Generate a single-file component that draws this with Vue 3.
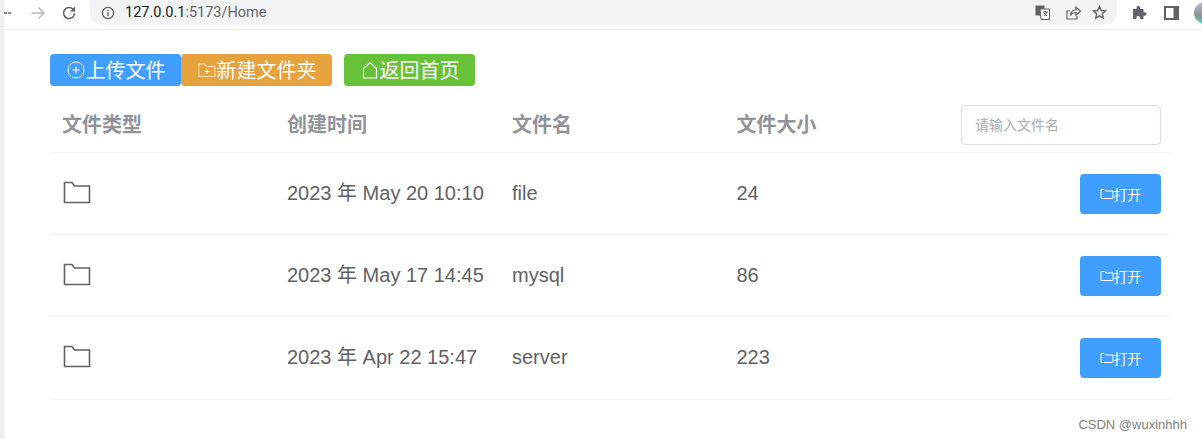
<template>
  <div class="page">
    <header class="chrome">
      <div class="nav">
        <svg class="back" width="8" height="14" viewBox="0 0 8 14"><path d="M0 7h7" stroke="#5f6368" stroke-width="1.6" fill="none" stroke-dasharray="3 1"/></svg>
        <svg width="16" height="16" viewBox="0 0 16 16"><path d="M1.5 8h12.5M8.5 2.500 14 8l-5.500 5.500" stroke="#b5b7ba" stroke-width="1.500" fill="none"/></svg>
        <svg width="16" height="16" viewBox="0 0 16 16"><path d="M13.500 8.500a5.500 5.500 0 1 1-1.600-4.400L13.500 5.700" stroke="#5f6368" stroke-width="1.600" fill="none"/><path d="M14 1.500v5H9z" fill="#5f6368"/></svg>
      </div>
      <div class="omnibox">
        <svg width="14" height="14" viewBox="0 0 14 14"><circle cx="7" cy="7" r="5.600" stroke="#5f6368" stroke-width="1.300" fill="none"/><path d="M7 6.200v4M7 3.700v1.400" stroke="#5f6368" stroke-width="1.300"/></svg>
        <span class="url"><b>127.0.0.1</b>:5173/Home</span>
        <span class="grow"></span>
        <svg width="15" height="15" viewBox="0 0 15 15"><rect x="0.500" y="0.500" width="9" height="10" fill="#5f6368"/><path d="M5 4h9.500v10.500H6z" fill="#fff" stroke="#5f6368"/><path d="M8 7h5M10.500 6v1M12 7l-3 4M9 8l3 3" stroke="#5f6368" fill="none"/></svg>
        <svg width="15" height="15" viewBox="0 0 15 15"><path d="M4 6H1v8h10v-3" stroke="#5f6368" stroke-width="1.200" fill="none"/><path d="M4.500 10.500c0-4 3-5.500 5.500-5.500V2.200l4.500 4-4.500 4V7.500c-2.500 0-4.500 1-5.500 3z" stroke="#5f6368" stroke-width="1.200" fill="none"/></svg>
        <svg width="15" height="15" viewBox="0 0 15 15"><path d="M7.500 1.500l1.800 4 4.300.4-3.300 2.900 1 4.300-3.800-2.300-3.800 2.300 1-4.300L1.400 5.900l4.300-.4z" stroke="#5f6368" stroke-width="1.400" fill="none"/></svg>
      </div>
      <div class="tools">
        <svg width="15" height="15" viewBox="0 0 15 15"><path d="M1 4h3.500V2.800a1.800 1.800 0 0 1 3.600 0V4H11.500v3.200h1.200a1.800 1.800 0 0 1 0 3.600h-1.200V14H8v-1.200a1.800 1.800 0 0 0-3.600 0V14H1z" fill="#5f6368"/></svg>
        <svg width="15" height="14" viewBox="0 0 15 14"><rect x="1" y="1" width="13" height="12" stroke="#5f6368" stroke-width="2" fill="#fff"/><rect x="9.500" y="1" width="4.500" height="12" fill="#5f6368"/></svg>
        <span class="avatar"></span>
      </div>
    </header>

    <main class="content">
      <div class="toolbar">
        <button class="btn blue" type="button">
          <svg width="20" height="20" viewBox="0 0 20 20"><circle cx="10" cy="10" r="8" stroke="#fff" fill="none"/><path d="M10 6.500v7M6.500 10h7" stroke="#fff" fill="none"/></svg><span class="label">上传文件</span>
        </button>
        <button class="btn orange" type="button">
          <svg width="20" height="20" viewBox="0 0 20 20"><path d="M2 4h5.500l2 2.500H18v10H2z" stroke="#f6dcae" stroke-width="1.100" fill="none"/><path d="M10 9v5M7.500 11.500h5" stroke="#fff" fill="none"/></svg><span class="label">新建文件夹</span>
        </button>
        <button class="btn green" type="button">
          <svg width="20" height="20" viewBox="0 0 20 20"><path d="M3.500 18V8.500L10 2.500l6.500 6V18z" stroke="#fff" stroke-width="1.100" fill="none"/></svg><span class="label">返回首页</span>
        </button>
      </div>

      <div class="row head">
        <div class="cell txt">文件类型</div>
        <div class="cell txt">创建时间</div>
        <div class="cell txt">文件名</div>
        <div class="cell txt">文件大小</div>
        <div class="cell end"><input class="search" placeholder="请输入文件名" /></div>
      </div>

      <div v-for="f in files" :key="f.name" class="row body">
        <div class="cell txt">
          <svg class="folder" width="28" height="23" viewBox="0 0 28 23"><path d="M1.500 1.500h7.500l2.500 3.500h15v16.500H1.500z" stroke="#606266" stroke-width="1.600" fill="none"/></svg>
        </div>
        <div class="cell line">{{ f.time }}</div>
        <div class="cell line">{{ f.name }}</div>
        <div class="cell line">{{ f.size }}</div>
        <div class="cell end">
          <button class="open" type="button">
            <svg width="14" height="14" viewBox="0 0 14 14"><path d="M1 2.500h4l1 1.500h7v7.500H1z" stroke="#fff" fill="none"/></svg>打开
          </button>
        </div>
      </div>
    </main>

    <span class="mark">CSDN @wuxinhhh</span>
  </div>
</template>

<script setup>
const files = [
  { time: '2023 年 May 20 10:10', name: 'file', size: '24' },
  { time: '2023 年 May 17 14:45', name: 'mysql', size: '86' },
  { time: '2023 年 Apr 22 15:47', name: 'server', size: '223' }
]
</script>

<style>
html, body { margin: 0; background: #fff; overflow: hidden; }
</style>

<style scoped>
.page {
  position: relative;
  width: 1202px;
  height: 439px;
  overflow: hidden;
  background: #fff;
  box-sizing: border-box;
  border-left: 4px solid #f0f0f0;
  font-family: "Liberation Sans", "Noto Sans CJK SC", sans-serif;
}
.chrome {
  height: 30px;
  box-sizing: border-box;
  border-bottom: 1px solid #eeeff1;
  display: flex;
  align-items: flex-start;
  background: #fff;
}
.nav {
  display: flex;
  align-items: center;
  height: 25px;
  width: 86px;
  flex: none;
}
.nav svg:nth-child(2) { margin-left: 18px; }
.nav svg:nth-child(3) { margin-left: 15px; }
.omnibox {
  flex: none;
  width: 1027px;
  height: 25px;
  background: #f1f3f4;
  border-radius: 0 0 13px 13px;
  display: flex;
  align-items: center;
  gap: 11px;
  padding: 0 10px 0 11px;
  box-sizing: border-box;
}
.omnibox > svg:nth-of-type(2) { margin-right: 5px; }
.url { font-family: "Roboto", "Liberation Sans", sans-serif; font-size: 14.500px; color: #5f6368; margin-left: -1px; }
.url b { font-weight: 400; color: #202124; }
.grow { flex: 1; margin-right: -12px; }
.tools {
  display: flex;
  align-items: center;
  height: 25px;
  gap: 17px;
  margin-left: 15px;
}
.avatar {
  width: 14px;
  height: 22px;
  border-radius: 11px 0 0 11px;
  background: linear-gradient(180deg, #b9c3d4 0%, #8f8f90 60%, #4fd9c4 100%);
  margin-left: -2px;
}
.content {
  width: 1123px;
  margin-left: 46px;
  padding-top: 24px;
}
.toolbar { display: flex; height: 32px; }
.btn {
  height: 32px;
  border: 0;
  border-radius: 4px;
  padding: 0;
  color: #fff;
  font: 20px "Liberation Sans", "Noto Sans CJK SC", sans-serif;
  display: flex;
  align-items: center;
  justify-content: center;
  box-sizing: border-box;
}
.label { padding-bottom: 2px; }
.blue { width: 131px; background: #409eff; }
.orange { width: 151px; background: #e6a23c; }
.green { width: 131px; margin-left: 12px; background: #67c23a; }
.row {
  display: grid;
  grid-template-columns: 225px 225px 224.500px 224.500px 1fr;
  align-items: center;
  border-bottom: 1px solid #f2f3f5;
  box-sizing: border-box;
}
.head {
  height: 67px;
  padding-top: 11px;
  font-size: 20px;
  font-weight: 700;
  color: #909399;
}
.body {
  height: 82px;
  font-size: 20px;
  color: #606266;
}
.body:last-child { height: 83px; padding-bottom: 1px; }
.cell { padding: 0 12px; min-width: 0; }
.txt { padding-bottom: 2px; }
.line { line-height: 29px; }
.end { display: flex; justify-content: flex-end; }
.search {
  width: 200px;
  height: 40px;
  box-sizing: border-box;
  border: 1px solid #dcdfe6;
  border-radius: 4px;
  padding: 0 14px 0 13px;
  font: 14px "Liberation Sans", "Noto Sans CJK SC", sans-serif;
  outline: none;
  background: #fff;
}
.search::placeholder { color: #a8abb2; opacity: 1; }
.folder { display: block; margin-left: 1px; }
.open {
  width: 81px;
  height: 40px;
  border: 0;
  border-radius: 4px;
  background: #409eff;
  color: #fff;
  font: 14px "Liberation Sans", "Noto Sans CJK SC", sans-serif;
  display: flex;
  align-items: center;
  justify-content: center;
  padding: 0;
}
.mark {
  position: absolute;
  right: 15px;
  bottom: 7px;
  font-size: 13px;
  color: #808080;
}
</style>
